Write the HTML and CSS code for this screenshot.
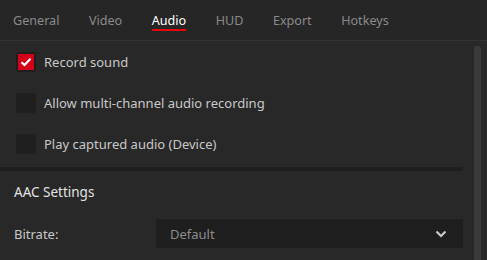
FILE: index.html
```html
<!DOCTYPE html>
<html lang="en">
 <head>
 <meta charset="UTF-8">
 <title>Settings - Audio</title>
 <link rel="stylesheet" href="styles.css">
 </head>
 <body>
 <div class="tabs">
  <span class="tab">General</span>
  <span class="tab">Video</span>
  <span class="tab active">Audio</span>
  <span class="tab">HUD</span>
  <span class="tab">Export</span>
  <span class="tab">Hotkeys</span>
 </div>
 <div class="main">
  <div class="content">
   <div class="group">
    <label class="check"><span class="box on"><svg width="12" height="10" viewBox="0 0 12 10"><path d="M1.5 5.2 L4.5 8 L10.5 1.8" fill="none" stroke="#fff" stroke-width="2.2"/></svg></span>Record sound</label>
    <label class="check"><span class="box"></span>Allow multi-channel audio recording</label>
    <label class="check"><span class="box"></span>Play captured audio (Device)</label>
   </div>
   <div class="sep"></div>
   <div class="section-title">AAC Settings</div>
   <div class="field">
    <span class="field-label">Bitrate:</span>
    <div class="select">
     <span>Default</span>
     <svg width="12" height="8" viewBox="0 0 12 8"><path d="M1.5 1.5 L6 6 L10.5 1.5" fill="none" stroke="#c8c8c8" stroke-width="2.2"/></svg>
    </div>
   </div>
  </div>
  <div class="scroll"><div class="thumb"></div></div>
 </div>
 </body>
</html>
```
FILE: styles.css
```css
* {
padding: 0px;
margin: 0px;
box-sizing: border-box;
}

html,
body {
width: 100%;
height: 100%;
overflow: hidden;
}

body {
background: #282828;
font-family: "Noto Sans", "Open Sans", sans-serif;
font-size: 13px;
color: #c9c9c9;
}

.tabs {
height: 41px;
display: flex;
gap: 29.5px;
padding-left: 13px;
background: #262626;
border-bottom: 1px solid #333333;
font-size: 12.6px;
}

.tab {
height: 40px;
line-height: 41px;
color: #8a8a8a;
}

.tab.active {
color: #ffffff;
position: relative;
}

.tab.active::after {
content: "";
position: absolute;
left: 0;
right: 0;
top: 29px;
height: 2px;
background: #e8000b;
}

.main {
display: flex;
height: 219px;
}

.content {
width: 463px;
}

.check {
display: flex;
align-items: center;
height: 41px;
padding-left: 16px;
gap: 8px;
}

.box {
width: 20px;
height: 20px;
border-radius: 2px;
background: #1f1f1f;
display: flex;
align-items: center;
justify-content: center;
}

.box.on {
background: #d4001a;
border: 2px solid #1e1e1e;
}

.sep {
height: 4px;
margin-top: 3px;
background: #1e1e1e;
}

.section-title {
height: 43px;
line-height: 43px;
padding-left: 14px;
color: #e2e2e2;
font-size: 13.5px;
}

.field {
display: flex;
align-items: center;
padding-top: 5px;
}

.field-label {
width: 156px;
padding-left: 14px;
}

.select {
flex: 1;
height: 29px;
background: #1e1e1e;
border-radius: 2px;
display: flex;
align-items: center;
justify-content: space-between;
padding: 0 16px 0 14px;
color: #8c8c8c;
}

.scroll {
flex: 1;
display: flex;
justify-content: flex-end;
padding-top: 5px;
}

.thumb {
width: 7px;
margin-right: 6px;
background: #3a3a3a;
border-radius: 3px 3px 0 0;
}
```
